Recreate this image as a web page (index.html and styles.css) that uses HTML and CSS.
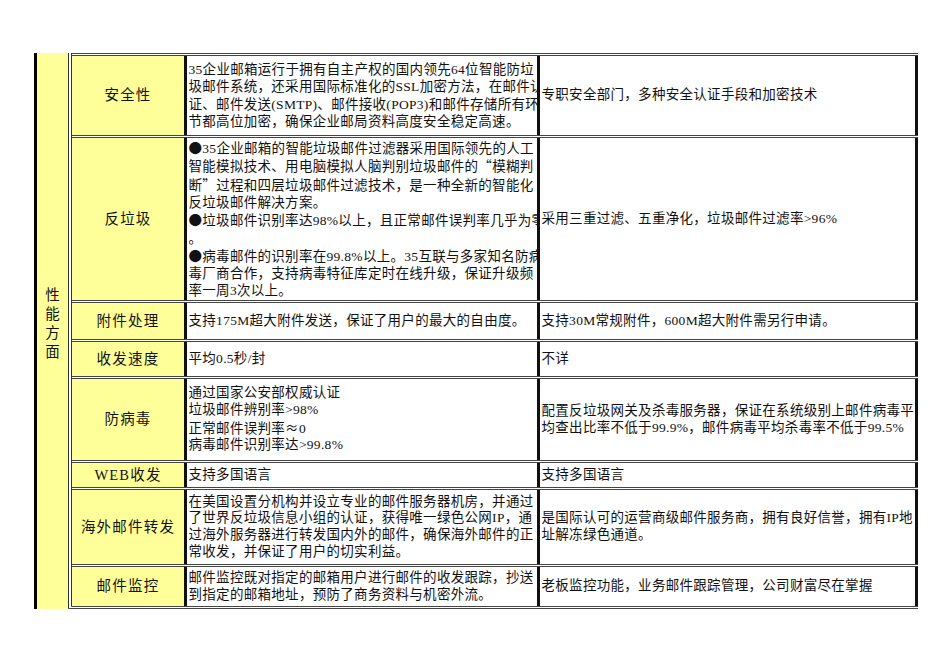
FILE: index.html
```html
<!DOCTYPE html>
<html lang="zh-CN">
<head>
<meta charset="utf-8">
<title>性能方面</title>
<link rel="stylesheet" href="styles.css">
</head>
<body>
<div class="page">
  <div class="side"><span>性</span><span>能</span><span>方</span><span>面</span></div>
  <div class="sheet">
    <div class="row r1">
      <div class="cell label">安全性</div>
      <div class="cell tall">
        <div>35企业邮箱运行于拥有自主产权的国内领先64位智能防垃</div>
        <div>圾邮件系统，还采用国际标准化的SSL加密方法，在邮件认</div>
        <div>证、邮件发送(SMTP)、邮件接收(POP3)和邮件存储所有环</div>
        <div>节都高位加密，确保企业邮局资料高度安全稳定高速。</div>
      </div>
      <div class="cell"><div>专职安全部门，多种安全认证手段和加密技术</div></div>
    </div>
    <div class="row r2">
      <div class="cell label">反垃圾</div>
      <div class="cell">
        <div><span class="cj">●</span>35企业邮箱的智能垃圾邮件过滤器采用国际领先的人工</div>
        <div>智能模拟技术、用电脑模拟人脑判别垃圾邮件的<span class="cj">“</span>模糊判</div>
        <div>断<span class="cj">”</span>过程和四层垃圾邮件过滤技术，是一种全新的智能化</div>
        <div>反垃圾邮件解决方案。</div>
        <div><span class="cj">●</span>垃圾邮件识别率达98%以上，且正常邮件误判率几乎为零</div>
        <div class="dot">。</div>
        <div><span class="cj">●</span>病毒邮件的识别率在99.8%以上。35互联与多家知名防病</div>
        <div>毒厂商合作，支持病毒特征库定时在线升级，保证升级频</div>
        <div>率一周3次以上。</div>
      </div>
      <div class="cell"><div>采用三重过滤、五重净化，垃圾邮件过滤率&gt;96%</div></div>
    </div>
    <div class="row r3">
      <div class="cell label">附件处理</div>
      <div class="cell"><div>支持175M超大附件发送，保证了用户的最大的自由度。</div></div>
      <div class="cell"><div>支持30M常规附件，600M超大附件需另行申请。</div></div>
    </div>
    <div class="row r4">
      <div class="cell label">收发速度</div>
      <div class="cell"><div>平均0.5秒/封</div></div>
      <div class="cell"><div>不详</div></div>
    </div>
    <div class="row r5">
      <div class="cell label">防病毒</div>
      <div class="cell">
        <div>通过国家公安部权威认证</div>
        <div>垃圾邮件辨别率&gt;98%</div>
        <div>正常邮件误判率<span class="cj">≈</span>0</div>
        <div>病毒邮件识别率达&gt;99.8%</div>
      </div>
      <div class="cell">
        <div>配置反垃圾网关及杀毒服务器，保证在系统级别上邮件病毒平</div>
        <div>均查出比率不低于99.9%，邮件病毒平均杀毒率不低于99.5%</div>
      </div>
    </div>
    <div class="row r6">
      <div class="cell label">WEB收发</div>
      <div class="cell"><div>支持多国语言</div></div>
      <div class="cell"><div>支持多国语言</div></div>
    </div>
    <div class="row r7">
      <div class="cell label">海外邮件转发</div>
      <div class="cell">
        <div>在美国设置分机构并设立专业的邮件服务器机房，并通过</div>
        <div>了世界反垃圾信息小组的认证，获得唯一绿色公网IP，通</div>
        <div>过海外服务器进行转发国内外的邮件，确保海外邮件的正</div>
        <div>常收发，并保证了用户的切实利益。</div>
      </div>
      <div class="cell">
        <div>是国际认可的运营商级邮件服务商，拥有良好信誉，拥有IP地</div>
        <div>址解冻绿色通道。</div>
      </div>
    </div>
    <div class="row r8">
      <div class="cell label">邮件监控</div>
      <div class="cell">
        <div>邮件监控既对指定的邮箱用户进行邮件的收发跟踪，抄送</div>
        <div>到指定的邮箱地址，预防了商务资料与机密外流。</div>
      </div>
      <div class="cell"><div>老板监控功能，业务邮件跟踪管理，公司财富尽在掌握</div></div>
    </div>
  </div>
</div>
</body>
</html>
```
FILE: styles.css
```css
* { box-sizing: border-box; }
body {
  margin: 0;
  background: #fff;
  color: #111;
  font-family: "Liberation Serif", "Noto Sans CJK SC", serif;
}
.page {
  display: flex;
  align-items: stretch;
  padding: 53px 0 0 34px;
}
.side {
  width: 34px;
  border-left: 3px solid #000;
  background: #ffff99;
  display: flex;
  flex-direction: column;
  align-items: center;
  justify-content: center;
  padding-bottom: 19px;
  font-family: "Noto Sans CJK SC", sans-serif;
  font-size: 14.5px;
  line-height: 19px;
}
.sheet {
  border-left: 4px double #333;
  border-bottom: 3px double #444;
}
.row {
  display: grid;
  grid-template-columns: 115px 353px 378px;
  border-top: 3px double #444;
}
.r1 { height: 82px; }
.r2 { height: 165px; }
.r3 { height: 39px; }
.r4 { height: 37px; }
.r5 { height: 84px; }
.r6 { height: 27px; }
.r7 { height: 77px; }
.r8 { height: 42px; }
.cell {
  display: flex;
  flex-direction: column;
  justify-content: center;
  overflow: hidden;
  white-space: nowrap;
  border-right: 3px solid #111;
  padding-left: 1.5px;
  font-size: 13.5px;
  letter-spacing: 0.3px;
  line-height: 16.6px;
}
.cell.tall { line-height: 17.3px; }
.cell .dot { line-height: 17.5px; }
.label {
  background: #ffff99;
  align-items: center;
  padding-left: 0;
  font-size: 14.5px;
  letter-spacing: 1.2px;
}
.cj { font-family: "Noto Sans CJK SC", sans-serif; }
```
